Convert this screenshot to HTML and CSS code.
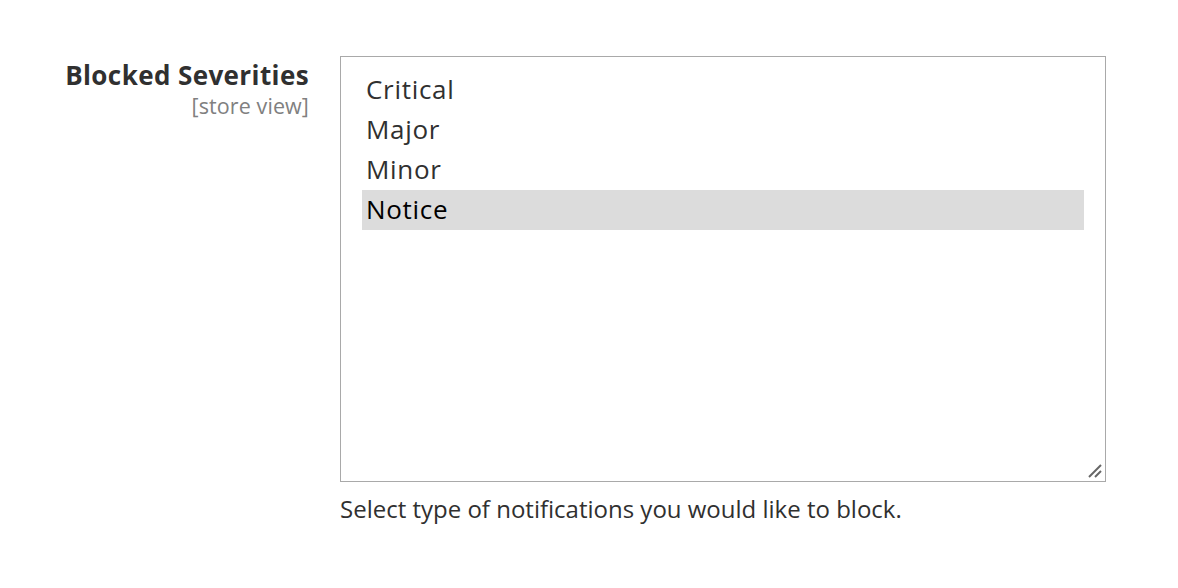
FILE: index.html
```html
<!DOCTYPE html>
<html>
<head>
<meta charset="utf-8">
<link rel="stylesheet" href="styles.css">
</head>
<body>
<div class="field">
  <div class="label">
    <div class="label-title">Blocked Severities</div>
    <div class="label-scope">[store view]</div>
  </div>
  <div class="control">
    <div class="multiselect">
      <div class="option">Critical</div>
      <div class="option">Major</div>
      <div class="option">Minor</div>
      <div class="option selected">Notice</div>
      <svg class="grip" width="16" height="16" viewBox="0 0 16 16">
        <line x1="2" y1="14" x2="14" y2="2" stroke="#666" stroke-width="2"/>
        <line x1="8" y1="14" x2="14" y2="8" stroke="#666" stroke-width="2"/>
      </svg>
    </div>
    <div class="note">Select type of notifications you would like to block.</div>
  </div>
</div>
</body>
</html>
```
FILE: styles.css
```css
html, body {
  margin: 0;
  padding: 0;
  background: #fff;
}
body {
  font-family: "Open Sans", "Noto Sans", sans-serif;
  color: #303030;
}
.field {
  display: flex;
  padding-top: 56px;
}
.label {
  width: 309px;
  text-align: right;
  flex-shrink: 0;
}
.label-title {
  font-size: 26px;
  font-weight: 700;
  letter-spacing: 0.4px;
  color: #303030;
  line-height: 36px;
  margin-top: 1px;
}
.label-scope {
  font-size: 21.5px;
  letter-spacing: 0.1px;
  color: #808080;
  line-height: 24px;
  margin-top: 1px;
}
.control {
  margin-left: 31px;
}
.multiselect {
  position: relative;
  width: 722px;
  height: 411px;
  border: 1px solid #a9a9a9;
  padding: 13px 21px 0 21px;
}
.option {
  font-size: 26px;
  letter-spacing: 0.7px;
  line-height: 39px;
  height: 39px;
  padding-bottom: 1px;
  padding-left: 4px;
  color: #303030;
}
.option.selected {
  background: #dcdcdc;
  color: #000;
}
.grip {
  position: absolute;
  right: 2px;
  bottom: 2px;
}
.note {
  font-size: 24px;
  line-height: 30px;
  margin-top: 12px;
  color: #303030;
}
```
